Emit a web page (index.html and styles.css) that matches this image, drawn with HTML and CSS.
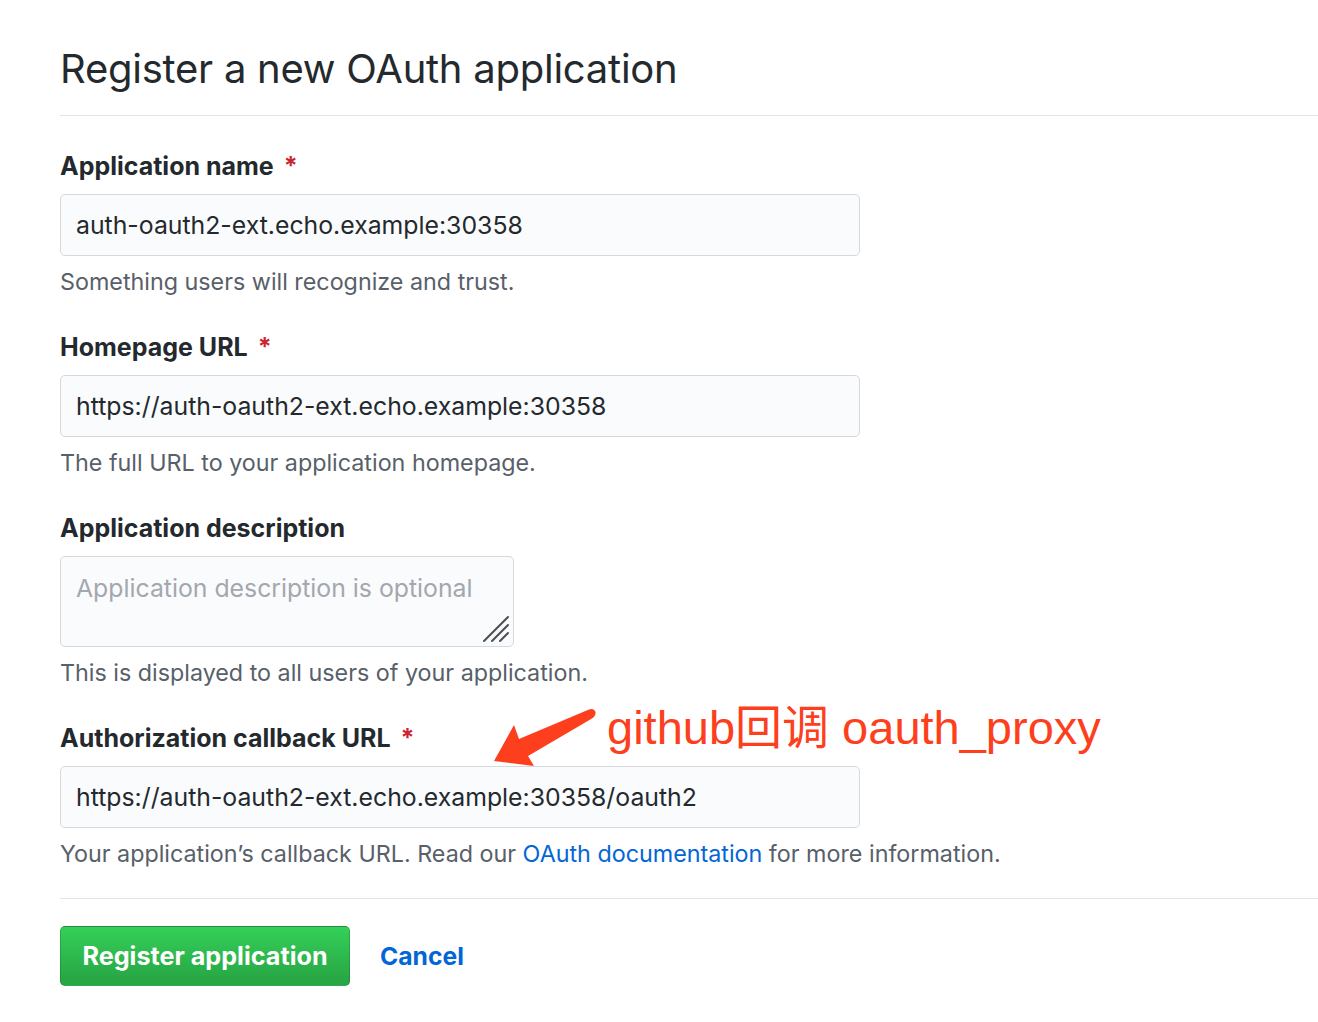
FILE: index.html
```html
<!DOCTYPE html>
<html lang="en">
<head>
<meta charset="utf-8">
<title>Register a new OAuth application</title>
<link rel="stylesheet" href="styles.css">
</head>
<body>
<div class="page">
  <div class="subhead">
    <h2 class="subhead-heading">Register a new OAuth application</h2>
  </div>
  <form class="oauth-form">
    <div class="form-group">
      <label class="form-label">Application name <span class="required">*</span></label>
      <input class="form-control" type="text" value="auth-oauth2-ext.echo.example:30358">
      <p class="note">Something users will recognize and trust.</p>
    </div>
    <div class="form-group">
      <label class="form-label">Homepage URL <span class="required">*</span></label>
      <input class="form-control" type="text" value="https://auth-oauth2-ext.echo.example:30358">
      <p class="note">The full URL to your application homepage.</p>
    </div>
    <div class="form-group">
      <label class="form-label">Application description</label>
      <div class="textarea-wrap">
        <textarea class="form-control textarea" placeholder="Application description is optional"></textarea>
        <svg class="grip" width="30" height="30" viewBox="0 0 30 30">
          <path d="M3 27 L27 3 M11 27 L27 11 M19 27 L27 19" stroke="#4a4f55" stroke-width="2" stroke-linecap="round" fill="none"/>
        </svg>
      </div>
      <p class="note">This is displayed to all users of your application.</p>
    </div>
    <div class="form-group callback">
      <label class="form-label">Authorization callback URL <span class="required">*</span></label>
      <input class="form-control" type="text" value="https://auth-oauth2-ext.echo.example:30358/oauth2">
      <p class="note">Your application’s callback URL. Read our <a class="link" href="#">OAuth documentation</a> for more information.</p>
      <div class="annotation">
        <svg class="arrow" width="120" height="70" viewBox="485 705 120 70">
          <path d="M589 711.5 Q594 710 595.5 714 Q596 718 592 720.5 L528 758 L534 768 L494 763 L514 727 L519 741 Z" fill="#fd3f1d"/>
        </svg>
        <span class="annotation-text">github回调 oauth_proxy</span>
      </div>
    </div>
    <div class="form-actions">
      <button class="btn-primary" type="button">Register application</button>
      <a class="cancel" href="#">Cancel</a>
    </div>
  </form>
</div>
</body>
</html>
```

FILE: styles.css
```css
html, body {
  margin: 0;
  padding: 0;
  background: #ffffff;
}

body {
  font-family: Inter, "Noto Sans", "Liberation Sans", sans-serif;
  color: #24292e;
  overflow: hidden;
}

.page {
  padding-left: 60px;
}

.subhead {
  height: 116px;
  border-bottom: 1px solid #e1e4e8;
  box-sizing: border-box;
  padding-top: 43px;
}

.subhead-heading {
  margin: 0;
  font-size: 40px;
  font-weight: 400;
  line-height: 52px;
  letter-spacing: -0.25px;
  color: #24292e;
}

.oauth-form {
  padding-top: 35px;
}

.form-group {
  margin-bottom: 35px;
}

.form-label {
  display: block;
  font-size: 25px;
  font-weight: 700;
  line-height: 30px;
  height: 30px;
  margin-bottom: 13px;
  color: #24292e;
}

.required {
  color: #cb2431;
  margin-left: 4px;
}

.form-control {
  display: block;
  box-sizing: border-box;
  width: 800px;
  height: 62px;
  padding: 0 15px;
  font-family: Inter, "Noto Sans", "Liberation Sans", sans-serif;
  font-size: 24.8px;
  color: #24292e;
  background: #fafbfc;
  border: 1px solid #d5d8dc;
  border-radius: 5px;
  outline: none;
  margin: 0;
}

.textarea-wrap {
  position: relative;
  width: 454px;
  height: 91px;
}

.textarea {
  width: 454px;
  height: 91px;
  resize: none;
  padding: 14px 15px;
  line-height: 34px;
  overflow: hidden;
}

.textarea::placeholder {
  color: #a3a8ae;
}

.grip {
  position: absolute;
  right: 3px;
  bottom: 3px;
}

.note {
  margin: 11px 0 0 0;
  font-size: 23.3px;
  line-height: 30px;
  color: #586069;
}

.link {
  color: #0366d6;
  text-decoration: none;
}

.callback {
  position: relative;
  margin-bottom: 29px;
}

.annotation {
  position: absolute;
  left: 425px;
  top: -45px;
  width: 700px;
  height: 80px;
}

.arrow {
  position: absolute;
  left: 0;
  top: 25px;
}

.annotation-text {
  position: absolute;
  left: 122px;
  top: 22px;
  font-family: "Liberation Sans", "Noto Sans CJK SC", sans-serif;
  font-size: 47px;
  line-height: 56px;
  color: #fd3f1d;
  white-space: nowrap;
}

.form-actions {
  border-top: 1px solid #e1e4e8;
  padding-top: 27px;
  display: flex;
  align-items: center;
  gap: 30px;
}

.btn-primary {
  box-sizing: border-box;
  width: 290px;
  height: 60px;
  font-family: Inter, "Noto Sans", "Liberation Sans", sans-serif;
  font-size: 25.2px;
  font-weight: 700;
  color: #ffffff;
  background: linear-gradient(180deg, #34d058 0%, #28a745 90%);
  border: 1px solid rgba(27, 31, 35, 0.2);
  border-radius: 5px;
  padding: 0;
  cursor: pointer;
}

.cancel {
  font-size: 24.7px;
  font-weight: 700;
  color: #0366d6;
  text-decoration: none;
}
```
